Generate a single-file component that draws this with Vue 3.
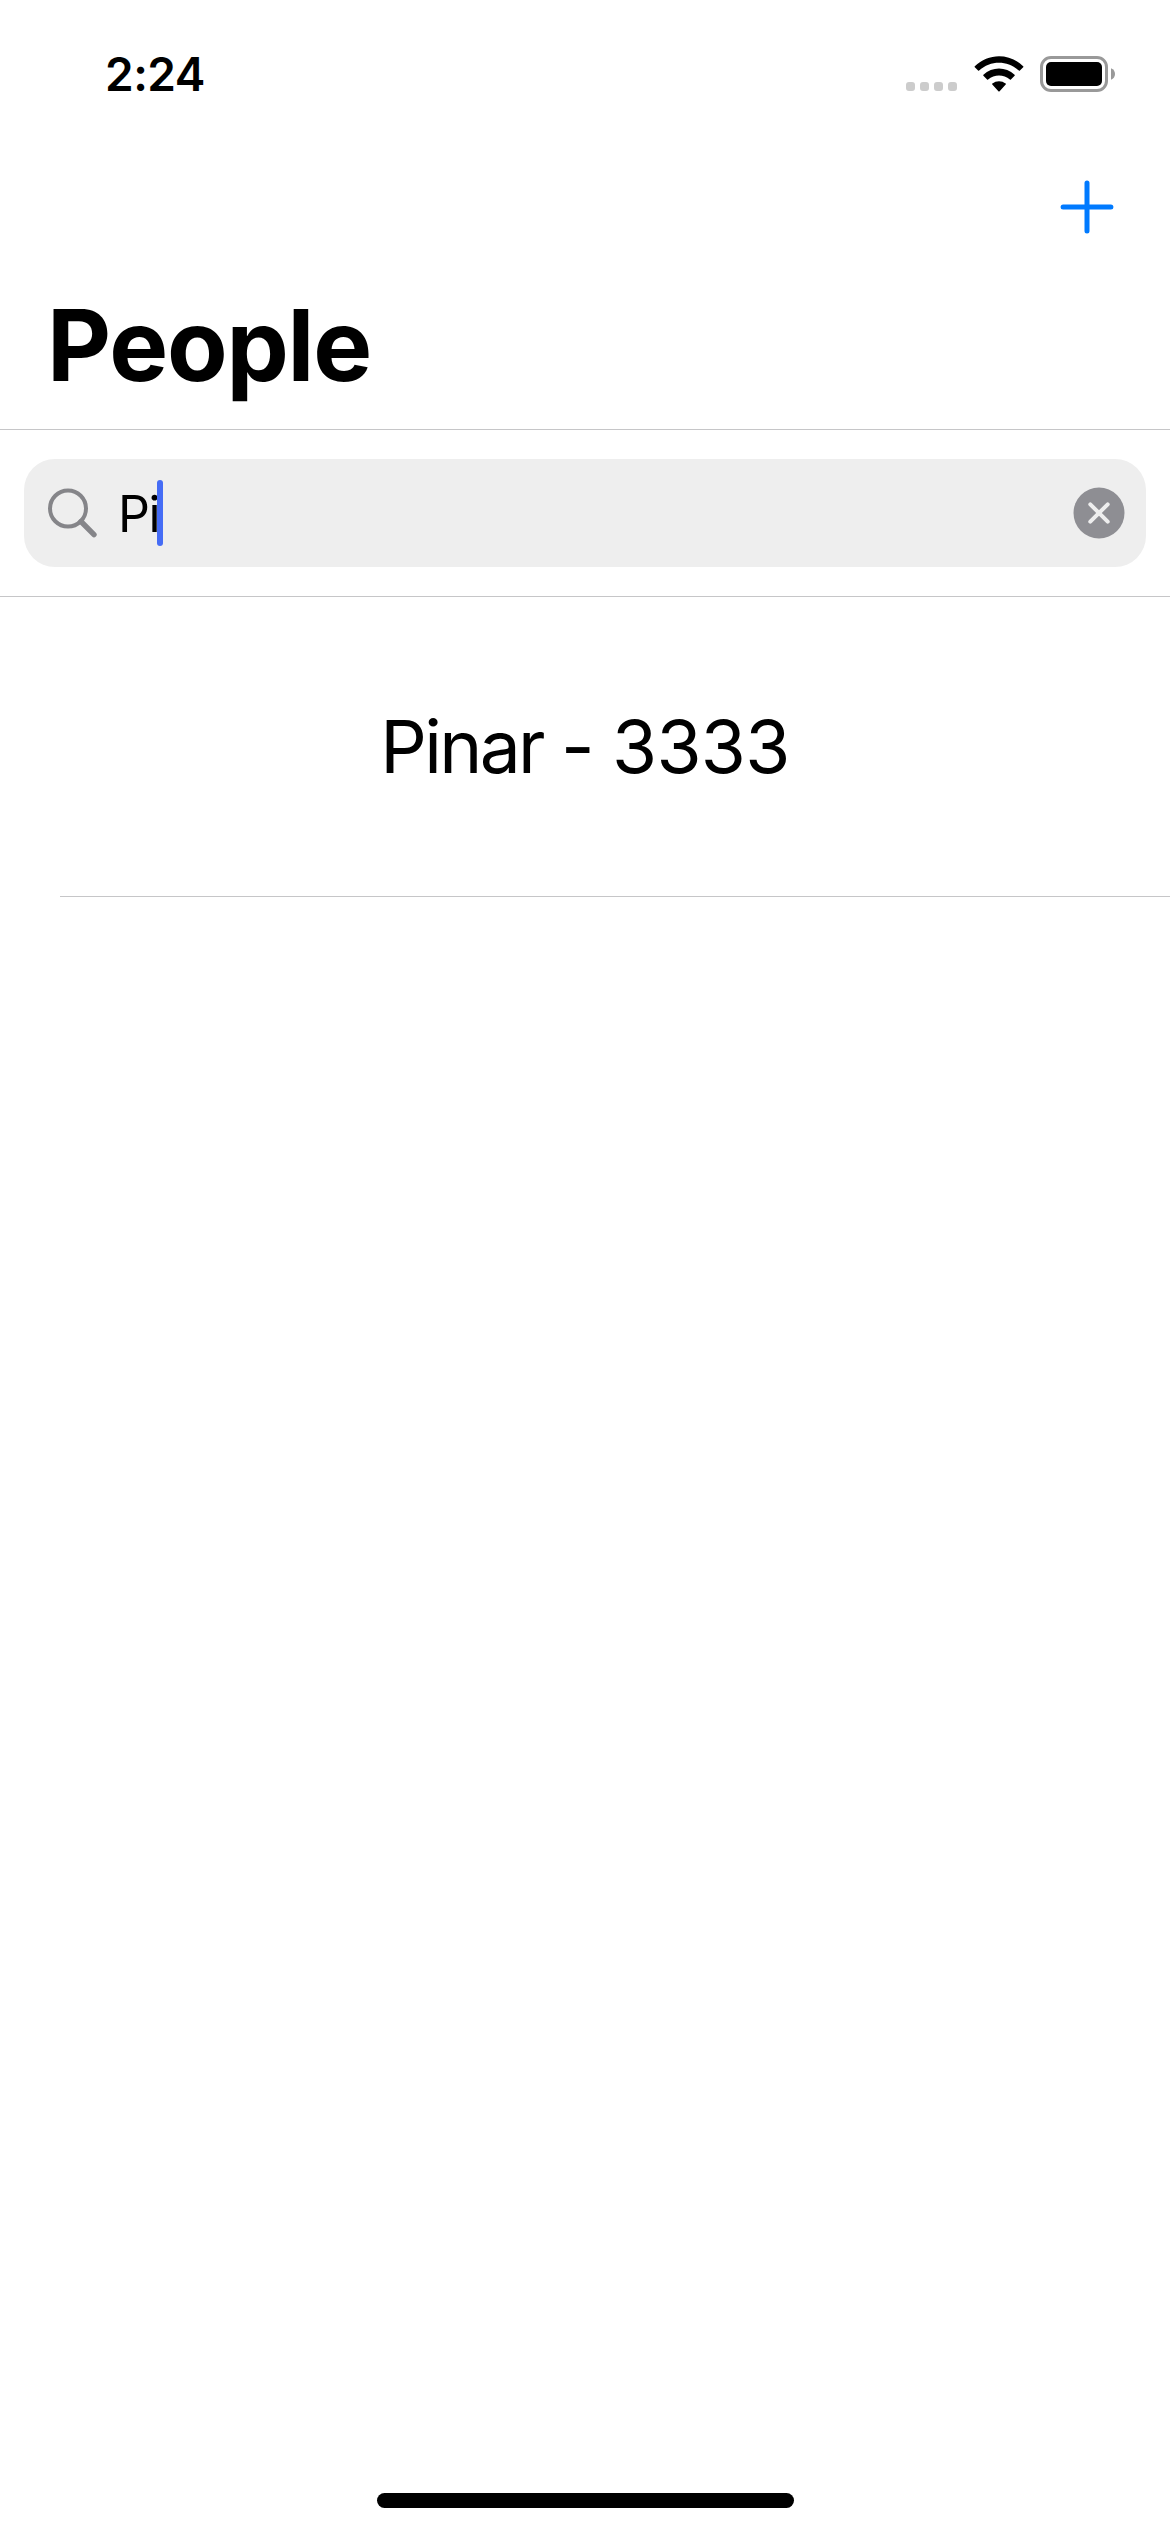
<script setup>
import { ref, computed } from 'vue'

const query = ref('Pi')
const people = [{ name: 'Pinar', number: '3333' }]
const results = computed(() => people.filter((p) => p.name.startsWith(query.value)))
</script>

<template>
  <div class="screen">
    <header class="status">
      <span class="time">2:24</span>
      <div class="indicators">
        <div class="signal"><i v-for="n in 4" :key="n"></i></div>
        <svg class="wifi" width="50" height="38" viewBox="0 0 50 38">
          <path d="M0.8 11.3C14.4-2.2 35.6-2.2 49.2 11.3Q49.7 11.8 49.2 12.3L45.9 15.6Q45.4 16.1 44.9 15.6C33.7 5.1 16.3 5.1 5.1 15.6Q4.6 16.1 4.1 15.6L0.8 12.3Q0.3 11.8 0.8 11.3Z" />
          <path d="M9.4 19.8C18.2 11.4 31.8 11.4 40.6 19.8Q41.1 20.3 40.6 20.8L36.9 24.5Q36.4 25 35.9 24.5C29.7 19 20.3 19 14.1 24.5Q13.6 25 13.1 24.5L9.4 20.8Q8.9 20.3 9.4 19.8Z" />
          <path d="M18.3 28.6C22 25.3 28 25.3 31.7 28.6Q32.2 29.1 31.7 29.6L25.6 36.3Q25 36.9 24.4 36.3L18.3 29.6Q17.8 29.1 18.3 28.6Z" />
        </svg>
        <svg class="battery" width="75" height="36" viewBox="0 0 75 36">
          <rect x="1.5" y="1.5" width="65" height="33" rx="9.5" fill="none" stroke="#999" stroke-width="3" />
          <rect x="6" y="6" width="56" height="24" rx="5" />
          <path d="M71 12.2Q75 14 75 18T71 23.8Z" fill="#999" />
        </svg>
      </div>
    </header>

    <nav class="toolbar">
      <svg width="54" height="54" viewBox="0 0 54 54">
        <path d="M27 3.1V50.9M3.1 27H50.9" fill="none" stroke="#007aff" stroke-width="5" stroke-linecap="round" />
      </svg>
    </nav>
    <h1 class="title">People</h1>

    <section class="search">
      <div class="field">
        <svg class="glass" width="50" height="50" viewBox="0 0 50 50">
          <circle cx="20" cy="20.5" r="18" fill="none" stroke="#858589" stroke-width="4" />
          <path d="M33 33.5L46 46.6" stroke="#858589" stroke-width="5.4" stroke-linecap="round" />
        </svg>
        <div class="query">{{ query }}<i class="caret"></i></div>
        <svg class="clear" width="52" height="52" viewBox="0 0 52 52">
          <circle cx="26" cy="26" r="25.5" fill="#8e8e93" />
          <path d="M17.3 17.3L34.7 34.7M34.7 17.3L17.3 34.7" stroke="#eee" stroke-width="4" stroke-linecap="round" />
        </svg>
      </div>
    </section>

    <main class="list">
      <div v-for="p in results" :key="p.number" class="row"><span class="name">{{ p.name }}</span> - {{ p.number }}</div>
    </main>
    <footer class="home"><div class="bar"></div></footer>
  </div>
</template>

<style>
body {
  background: #fff;
}
</style>

<style scoped>
.screen {
  box-sizing: border-box;
  width: 1170px;
  height: 2532px;
  display: flex;
  flex-direction: column;
  background: #fff;
  color: #000;
  font-family: Inter, "Liberation Sans", sans-serif;
}
.status {
  height: 149px;
  display: flex;
  justify-content: space-between;
  align-items: center;
  padding: 0 55px 0 105px;
}
.time {
  margin-bottom: 2px;
  font-size: 46px;
  font-weight: 600;
  letter-spacing: -0.5px;
}
.indicators {
  display: flex;
  align-items: flex-start;
  height: 37px;
}
.signal {
  display: flex;
  gap: 5px;
  margin: 26px 17px 0 0;
}
.signal i {
  width: 9px;
  height: 9px;
  border-radius: 3px;
  background: #ccc;
}
.wifi {
  margin: -1px 16px 0 0;
}
.toolbar {
  height: 115px;
  display: flex;
  justify-content: flex-end;
  align-items: center;
  padding-right: 56px;
}
.title {
  height: 165px;
  margin: 0;
  padding-left: 47px;
  border-bottom: 1px solid #c6c6c8;
  font-size: 99px;
  line-height: 162px;
  font-weight: 700;
  letter-spacing: -1.2px;
}
.search {
  height: 166px;
  display: flex;
  align-items: center;
  padding: 0 24px;
  border-bottom: 1px solid #c6c6c8;
}
.field {
  flex: 1;
  height: 108px;
  display: flex;
  align-items: center;
  padding: 0 21px 0 24px;
  border-radius: 31px;
  background: #eee;
  box-sizing: border-box;
}
.query {
  position: relative;
  flex: 1;
  margin-left: 20px;
  font-size: 50px;
  line-height: 66px;
  letter-spacing: -1.5px;
  padding-top: 2px;
}
.caret {
  position: absolute;
  left: 39px;
  top: 1px;
  width: 6px;
  height: 66px;
  border-radius: 3px;
  background: #456cf5;
}
.list {
  flex: 1;
}
.row {
  height: 299px;
  margin-left: 60px;
  padding-right: 60px;
  border-bottom: 1px solid #c6c6c8;
  font-size: 73px;
  line-height: 299px;
  text-align: center;
  letter-spacing: -0.7px;
  word-spacing: -1.6px;
}
.name {
  letter-spacing: -2.7px;
}
.home {
  display: flex;
  justify-content: center;
  padding-bottom: 24px;
}
.bar {
  width: 417px;
  height: 15px;
  border-radius: 8px;
  background: #000;
}
</style>
